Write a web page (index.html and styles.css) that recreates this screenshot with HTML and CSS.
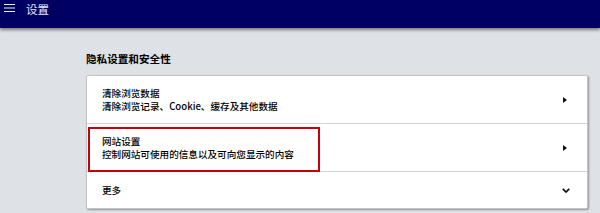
FILE: index.html
```html
<!DOCTYPE html>
<html lang="zh-CN">
<head>
    <meta charset="UTF-8">
    <meta name="viewport" content="width=device-width, initial-scale=1.0">
    <title>设置</title>
    <link rel="stylesheet" href="styles.css">
</head>
<body>

    <div class="header">
        <span class="menu-icon">
            <svg width="11" height="8" viewBox="0 0 11 8"><path d="M0 0.5H11M0 4H11M0 7.5H11" stroke="#e8ecff" stroke-width="1.2"/></svg>
        </span>
        <span class="header-title">设置</span>
    </div>

    <div class="main">
        <h2 class="section-title">隐私设置和安全性</h2>
        <div class="card">
            <div class="row">
                <div class="row-text">
                    <div class="row-label">清除浏览数据</div>
                    <div class="row-sub">清除浏览记录、Cookie、缓存及其他数据</div>
                </div>
                <span class="arrow"></span>
            </div>
            <div class="row">
                <div class="row-text">
                    <div class="row-label">网站设置</div>
                    <div class="row-sub">控制网站可使用的信息以及可向您显示的内容</div>
                </div>
                <span class="arrow"></span>
                <div class="highlight"></div>
            </div>
            <div class="row row-more">
                <div class="row-label">更多</div>
                <svg class="chevron" width="8" height="5" viewBox="0 0 8 5"><path d="M0.8 0.8L4 4L7.2 0.8" fill="none" stroke="#111" stroke-width="1.7"/></svg>
            </div>
        </div>
    </div>

</body>
</html>
```

FILE: styles.css
```css
* {
    margin: 0;
    padding: 0;
    box-sizing: border-box;
}

body {
    font-family: 'Noto Sans CJK SC', 'Liberation Sans', sans-serif;
    background-color: #dee1e5;
    color: #000;
    width: 600px;
    height: 213px;
    overflow: hidden;
}

.header {
    height: 28px;
    background: #000062;
    display: flex;
    align-items: center;
    padding-left: 4px;
    box-shadow: 0 2px 3px rgba(0, 0, 0, 0.45);
    position: relative;
}

.menu-icon {
    display: flex;
    margin-top: -12px;
}

.header-title {
    color: #e8ecff;
    font-size: 11.5px;
    line-height: 14px;
    margin-left: 11px;
    margin-top: -11px;
}

.main {
    margin-left: 86px;
    width: 502px;
    padding-top: 24px;
}

.section-title {
    font-size: 10.6px;
    font-weight: bold;
    line-height: 13px;
    margin-bottom: 10px;
}

.card {
    background: white;
    border: 1px solid #c4c4c4;
    border-radius: 2px;
    box-shadow: 1px 1px 2px rgba(0, 0, 0, 0.35);
}

.row {
    position: relative;
    display: flex;
    align-items: center;
    justify-content: space-between;
    height: 48px;
    padding: 0 20px 0 15px;
    border-bottom: 1px solid #d4d4d4;
}

.row-more {
    height: 36px;
    border-bottom: none;
    padding-right: 17px;
}

.row-label, .row-sub {
    font-size: 9.6px;
    font-weight: 500;
    line-height: 13px;
}

.arrow {
    width: 0;
    height: 0;
    border-top: 3px solid transparent;
    border-bottom: 3px solid transparent;
    border-left: 4px solid #111;
}

.highlight {
    position: absolute;
    left: 1px;
    top: 3px;
    width: 232px;
    height: 45px;
    border: 2px solid #c4000c;
}
```
